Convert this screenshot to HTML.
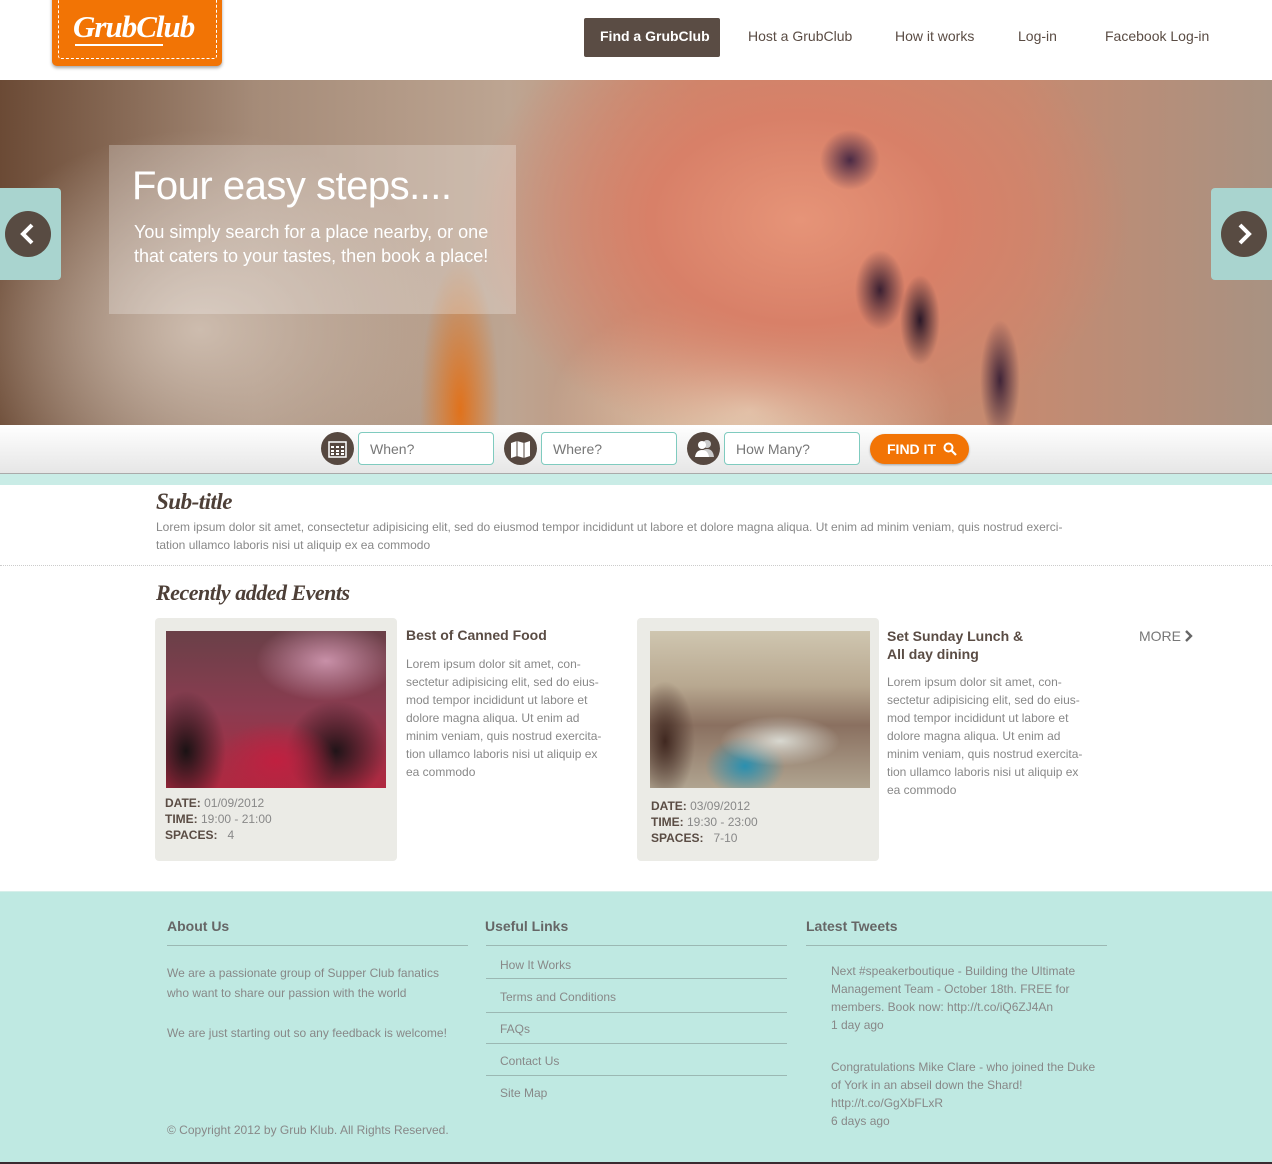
<!DOCTYPE html>
<html><head><meta charset="utf-8">
<style>
*{margin:0;padding:0;box-sizing:border-box}
body{width:1272px;height:1164px;position:relative;background:#fff;font-family:"Liberation Sans",Arial,sans-serif;overflow:hidden}
.a{position:absolute}
.nav{font-size:14px;color:#5a4c44;top:28px}
.script{font-family:"Liberation Serif",serif;font-style:italic;font-weight:bold;color:#4d3f37;letter-spacing:-0.5px}
.inp{position:absolute;top:432px;height:33px;border:1px solid #7fcbbf;border-radius:4px;background:#fff;font-size:14px;color:#777;padding:8px 11px}
.ic{position:absolute;top:432px;width:33px;height:33px;border-radius:50%;background:#564840}
.card{position:absolute;background:#ebebe6;border-radius:4px}
.p{font-size:12px;color:#888;line-height:18px}
.meta{font-size:12px;color:#888;line-height:16px}
.meta b{color:#5a4c44}
.ft h3{font-size:14px;color:#666;font-weight:bold}
.ft{color:#888;font-size:12px}
.line{position:absolute;height:1px;background:#9bb8b3}
</style></head><body>

<!-- header -->
<div class="a" style="left:52px;top:-5px;width:170px;height:71px;background:#f27405;border-radius:0 0 5px 5px;box-shadow:0 2px 3px rgba(0,0,0,.35)"></div>
<div class="a" style="left:58px;top:-2px;width:159px;height:61px;border:1px dashed #fff;border-radius:0 0 3px 3px"></div>
<div class="a script" style="left:73px;top:9px;font-size:31px;color:#fff;font-weight:bold;letter-spacing:-1px">GrubClub</div>
<div class="a" style="left:75px;top:44px;width:88px;height:2px;background:#fff"></div>

<div class="a" style="left:584px;top:18px;width:136px;height:39px;background:#5a4c44;border-radius:2px"></div>
<div class="a nav" style="left:600px;color:#fff;font-weight:bold">Find a GrubClub</div>
<div class="a nav" style="left:748px">Host a GrubClub</div>
<div class="a nav" style="left:895px">How it works</div>
<div class="a nav" style="left:1018px">Log-in</div>
<div class="a nav" style="left:1105px">Facebook Log-in</div>

<!-- hero -->
<div class="a" style="left:0;top:80px;width:1272px;height:345px;overflow:hidden;background:
radial-gradient(ellipse 25px 40px at 880px 210px,#3a2032 0,rgba(58,32,50,0) 100%),
radial-gradient(ellipse 20px 45px at 920px 240px,#2a1828 0,rgba(42,24,40,0) 100%),
radial-gradient(ellipse 30px 30px at 850px 80px,#4a2a45 0,rgba(74,42,69,0) 100%),
radial-gradient(ellipse 20px 60px at 1000px 300px,#3f2438 0,rgba(63,36,56,0) 100%),
radial-gradient(ellipse 40px 150px at 460px 330px,#e0721c 0,rgba(224,114,28,0) 100%),
radial-gradient(ellipse 330px 230px at 800px 140px,#e69478 0,#d88068 45%,rgba(210,130,110,0) 100%),
radial-gradient(ellipse 200px 120px at 750px 330px,#e6d9c0 0,rgba(230,217,192,0) 100%),
radial-gradient(ellipse 250px 200px at 200px 250px,#cdbcae 0,rgba(190,170,150,0) 100%),
linear-gradient(90deg,#6b4a35 0,#a58b78 20%,#bda592 40%,#c58a6e 55%,#c68a70 80%,#a89282 100%)">
</div>
<div class="a" style="left:109px;top:145px;width:407px;height:169px;background:rgba(255,255,255,.25)"></div>
<div class="a" style="left:132px;top:164px;font-size:40px;color:#fff;letter-spacing:-0.5px">Four easy steps....</div>
<div class="a" style="left:134px;top:220px;font-size:18px;color:#fff;line-height:24px;width:370px">You simply search for a place nearby, or one that caters to your tastes, then book a place!</div>

<div class="a" style="left:0;top:188px;width:61px;height:92px;background:#a9d4cf;border-radius:0 4px 4px 0"></div>
<svg class="a" style="left:5px;top:211px" width="46" height="46"><circle cx="23" cy="23" r="23" fill="#584b42"/><path d="M27 14 L18 23 L27 32" stroke="#fff" stroke-width="4" fill="none"/></svg>
<div class="a" style="left:1211px;top:188px;width:61px;height:92px;background:#a9d4cf;border-radius:4px 0 0 4px"></div>
<svg class="a" style="left:1221px;top:211px" width="46" height="46"><circle cx="23" cy="23" r="23" fill="#584b42"/><path d="M19 14 L28 23 L19 32" stroke="#fff" stroke-width="4" fill="none"/></svg>

<!-- search bar -->
<div class="a" style="left:0;top:425px;width:1272px;height:49px;background:linear-gradient(#fff,#e6e6e6);border-bottom:1px solid #aaa"></div>
<div class="a" style="left:0;top:474px;width:1272px;height:11px;background:#c9ece6"></div>
<div class="ic" style="left:321px"></div>
<svg class="a" style="left:328px;top:440px" width="19" height="18"><rect x="1" y="2" width="17" height="15" fill="none" stroke="#fff" stroke-width="1.5"/><g fill="#fff"><rect x="3" y="6" width="3" height="2"/><rect x="8" y="6" width="3" height="2"/><rect x="13" y="6" width="3" height="2"/><rect x="3" y="10" width="3" height="2"/><rect x="8" y="10" width="3" height="2"/><rect x="13" y="10" width="3" height="2"/><rect x="3" y="13" width="3" height="2"/><rect x="8" y="13" width="3" height="2"/><rect x="13" y="13" width="3" height="2"/></g></svg>
<div class="inp" style="left:358px;width:136px">When?</div>
<div class="ic" style="left:504px"></div>
<svg class="a" style="left:510px;top:440px" width="21" height="18"><path d="M1 3 L7 1 L14 3 L20 1 L20 16 L14 18 L7 16 L1 18Z" fill="#fff"/><path d="M7 1 V16 M14 3 V18" stroke="#564840" stroke-width="1"/></svg>
<div class="inp" style="left:541px;width:136px">Where?</div>
<div class="ic" style="left:687px"></div>
<svg class="a" style="left:692px;top:438px" width="24" height="20"><circle cx="15" cy="6" r="4" fill="#ccc"/><path d="M8 19 Q9 11 15 11 Q21 11 22 19Z" fill="#ccc"/><circle cx="10" cy="7" r="4" fill="#fff"/><path d="M3 19 Q4 12 10 12 Q16 12 17 19Z" fill="#fff"/></svg>
<div class="inp" style="left:724px;width:136px">How Many?</div>
<div class="a" style="left:870px;top:434px;width:99px;height:30px;background:#f27405;border-radius:15px;box-shadow:0 1px 2px rgba(0,0,0,.3)"></div>
<div class="a" style="left:887px;top:441px;font-size:14px;font-weight:bold;color:#fff">FIND IT</div>
<svg class="a" style="left:943px;top:442px" width="14" height="14"><circle cx="5.5" cy="5.5" r="4" stroke="#fff" stroke-width="2" fill="none"/><path d="M8.5 8.5 L13 13" stroke="#fff" stroke-width="2.2"/></svg>

<!-- subtitle -->
<div class="a script" style="left:156px;top:489px;font-size:23px">Sub-title</div>
<div class="a p" style="left:156px;top:518px;width:920px;line-height:18px">Lorem ipsum dolor sit amet, consectetur adipisicing elit, sed do eiusmod tempor incididunt ut labore et dolore magna aliqua. Ut enim ad minim veniam, quis nostrud exerci-<br>tation ullamco laboris nisi ut aliquip ex ea commodo</div>
<div class="a" style="left:0;top:565px;width:1272px;border-top:1px dotted #ccc"></div>

<div class="a script" style="left:156px;top:580px;font-size:22px">Recently added Events</div>

<!-- card 1 -->
<div class="card" style="left:155px;top:618px;width:242px;height:243px"></div>
<div class="a" style="left:166px;top:631px;width:220px;height:157px;background:
radial-gradient(ellipse 60px 40px at 110px 130px,#c02040 0,rgba(190,30,60,0) 100%),
radial-gradient(ellipse 50px 50px at 170px 120px,#201418 0,rgba(30,20,25,0) 100%),
radial-gradient(ellipse 40px 60px at 20px 120px,#1a1214 0,rgba(30,20,25,0) 100%),
radial-gradient(ellipse 70px 40px at 160px 30px,#c890a8 0,rgba(200,140,170,0) 100%),
linear-gradient(#6a4048,#8a3c50 50%,#b02840)"></div>
<div class="a" style="left:406px;top:627px;font-size:14px;font-weight:bold;color:#5a4c44">Best of Canned Food</div>
<div class="a p" style="left:406px;top:655px;width:205px">Lorem ipsum dolor sit amet, con-<br>sectetur adipisicing elit, sed do eius-<br>mod tempor incididunt ut labore et<br>dolore magna aliqua. Ut enim ad<br>minim veniam, quis nostrud exercita-<br>tion ullamco laboris nisi ut aliquip ex<br>ea commodo</div>
<div class="a meta" style="left:165px;top:795px"><b>DATE:</b> 01/09/2012<br><b>TIME:</b> 19:00 - 21:00<br><b>SPACES:</b> &nbsp; 4</div>

<!-- card 2 -->
<div class="card" style="left:637px;top:618px;width:242px;height:243px"></div>
<div class="a" style="left:650px;top:631px;width:220px;height:157px;background:
radial-gradient(ellipse 60px 25px at 130px 110px,#d8d8d0 0,rgba(220,220,210,0) 100%),
radial-gradient(ellipse 40px 30px at 95px 135px,#2a90b0 0,rgba(40,140,170,0) 100%),
radial-gradient(ellipse 30px 60px at 15px 110px,#402820 0,rgba(60,40,30,0) 100%),
linear-gradient(#cfc6b0,#b8a890 35%,#8a7060 60%,#b0a490)"></div>
<div class="a" style="left:887px;top:627px;font-size:14px;font-weight:bold;color:#5a4c44;line-height:18px">Set Sunday Lunch &amp;<br>All day dining</div>
<div class="a p" style="left:887px;top:673px;width:205px">Lorem ipsum dolor sit amet, con-<br>sectetur adipisicing elit, sed do eius-<br>mod tempor incididunt ut labore et<br>dolore magna aliqua. Ut enim ad<br>minim veniam, quis nostrud exercita-<br>tion ullamco laboris nisi ut aliquip ex<br>ea commodo</div>
<div class="a meta" style="left:651px;top:798px"><b>DATE:</b> 03/09/2012<br><b>TIME:</b> 19:30 - 23:00<br><b>SPACES:</b> &nbsp; 7-10</div>

<div class="a" style="left:1139px;top:628px;font-size:14px;color:#777">MORE</div>
<svg class="a" style="left:1184px;top:630px" width="10" height="12"><path d="M2 1 L7 6 L2 11" stroke="#666" stroke-width="2.4" fill="none"/></svg>

<!-- footer -->
<div class="a ft" style="left:0;top:891px;width:1272px;height:273px;background:#bfe9e2;border-top:1px solid #d7efea;border-bottom:2px solid #3a2a30"></div>
<div class="a ft" style="left:167px;top:918px"><h3>About Us</h3></div>
<div class="line" style="left:167px;top:945px;width:301px"></div>
<div class="a ft" style="left:167px;top:963px;line-height:20px;font-size:12px;color:#888">We are a passionate group of Supper Club fanatics<br>who want to share our passion with the world<br><br style="line-height:18px">We are just starting out so any feedback is welcome!</div>
<div class="a ft" style="left:167px;top:1123px">© Copyright 2012 by Grub Klub. All Rights Reserved.</div>

<div class="a ft" style="left:485px;top:918px"><h3>Useful Links</h3></div>
<div class="line" style="left:486px;top:945px;width:301px"></div>
<div class="a ft" style="left:500px;top:958px">How It Works</div>
<div class="line" style="left:486px;top:978px;width:301px"></div>
<div class="a ft" style="left:500px;top:990px">Terms and Conditions</div>
<div class="line" style="left:486px;top:1012px;width:301px"></div>
<div class="a ft" style="left:500px;top:1022px">FAQs</div>
<div class="line" style="left:486px;top:1043px;width:301px"></div>
<div class="a ft" style="left:500px;top:1054px">Contact Us</div>
<div class="line" style="left:486px;top:1075px;width:301px"></div>
<div class="a ft" style="left:500px;top:1086px">Site Map</div>

<div class="a ft" style="left:806px;top:918px"><h3>Latest Tweets</h3></div>
<div class="line" style="left:806px;top:945px;width:301px"></div>
<div class="a ft" style="left:831px;top:962px;line-height:18px">Next #speakerboutique - Building the Ultimate<br>Management Team - October 18th. FREE for<br>members. Book now: http://t.co/iQ6ZJ4An<br>1 day ago</div>
<div class="a ft" style="left:831px;top:1058px;line-height:18px">Congratulations Mike Clare - who joined the Duke<br>of York in an abseil down the Shard!<br>http://t.co/GgXbFLxR<br>6 days ago</div>

</body></html>
